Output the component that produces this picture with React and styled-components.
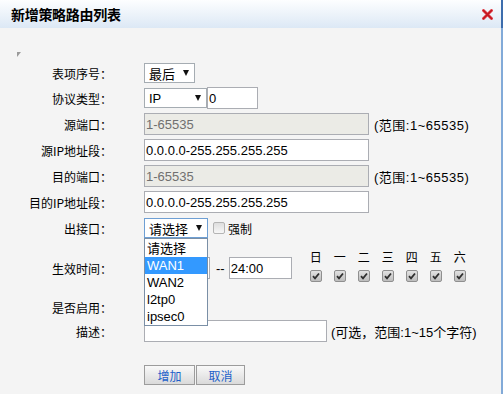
import React from 'react';
import styled, { createGlobalStyle } from 'styled-components';

const GlobalStyle = createGlobalStyle`
  html, body {
    margin: 0;
    padding: 0;
    background: #f4f4f4;
  }
  body {
    font-family: "Liberation Sans", "Noto Sans CJK SC", sans-serif;
    font-size: 12px;
    color: #000;
  }
`;

const Dialog = styled.div`
  width: 503px;
  height: 394px;
  display: flex;
  flex-direction: column;
  overflow: hidden;
`;

const TitleBar = styled.div`
  height: 28px;
  flex-shrink: 0;
  box-sizing: border-box;
  display: flex;
  align-items: center;
  justify-content: space-between;
  padding: 0 8px 0 11px;
  background: linear-gradient(#fdfeff, #dce8f5);
  border-right: 2px solid #3d6dad;
`;

const Title = styled.h1`
  margin: 0;
  font-size: 14px;
  font-weight: bold;
  font-family: "Noto Sans CJK SC", sans-serif;
  letter-spacing: -0.3px;
`;

const Body = styled.div`
  flex: 1;
  background: #f4f4f4;
  border-right: 2px solid #82aad8;
`;

const MarkRow = styled.div`
  height: 33px;
  box-sizing: border-box;
  padding: 18px 0 0 17px;
`;

const Row = styled.div`
  display: flex;
  align-items: center;
  height: ${p => p.h}px;
`;

const Label = styled.div`
  width: 112px;
  flex-shrink: 0;
  margin-right: 32px;
  text-align: right;
  white-space: nowrap;
  font-size: 12px;
  font-family: "Noto Sans CJK SC", sans-serif;
`;

const SelectBox = styled.div`
  position: relative;
  display: inline-flex;
  align-items: center;
  justify-content: space-between;
  box-sizing: border-box;
  width: ${p => p.w}px;
  height: 20px;
  padding: 0 5px 0 4px;
  border: 1px solid ${p => (p.open ? '#6e9fd4' : '#a5acb2')};
  background: #fff;
  font-size: 13px;
  font-family: "Liberation Sans", "Noto Sans CJK SC", sans-serif;
  flex-shrink: 0;
`;

const Arrow = styled.span`
  width: 0;
  height: 0;
  border-left: 3px solid transparent;
  border-right: 3px solid transparent;
  border-top: 6px solid #111;
`;

const DropList = styled.div`
  position: absolute;
  top: 19px;
  left: -1px;
  width: 64px;
  box-sizing: border-box;
  padding-top: 1px;
  border: 1px solid #7a8fa6;
  background: #fff;
  z-index: 10;
`;

const Option = styled.div`
  height: 17px;
  line-height: 17px;
  padding-left: 2px;
  font-size: 13px;
  white-space: nowrap;
  background: ${p => (p.active ? '#3399ff' : '#fff')};
  color: ${p => (p.active ? '#fff' : '#000')};
`;

const TextInput = styled.input`
  width: ${p => p.w}px;
  height: 22px;
  box-sizing: border-box;
  padding: 0 1px;
  margin: 0;
  border: 1px solid #abadb3;
  background: ${p => (p.disabled ? '#ebebe6' : '#fff')};
  color: ${p => (p.disabled ? '#707070' : '#000')};
  font-family: "Liberation Sans", sans-serif;
  font-size: 13px;
  outline: 0;
  flex-shrink: 0;
`;

const Hint = styled.span`
  margin-left: ${p => p.ml || 5}px;
  font-size: 13px;
  letter-spacing: ${p => p.ls || 0}px;
  white-space: nowrap;
`;

const Dash = styled.span`
  margin: 0 4px 0 6px;
  font-size: 13px;
`;

const CheckLabel = styled.span`
  margin-left: 3px;
  font-size: 12px;
  font-family: "Noto Sans CJK SC", sans-serif;
`;

const Box = styled.span`
  display: inline-flex;
  align-items: center;
  justify-content: center;
  width: 12px;
  height: 12px;
  box-sizing: border-box;
  margin-left: ${p => p.ml || 0}px;
  border: 1px solid ${p => (p.checked ? '#8f8f8f' : '#b4b4b4')};
  border-radius: 2px;
  background: ${p => (p.checked
    ? 'linear-gradient(#e2e2e2, #bdbdbd)'
    : 'linear-gradient(#dedede, #f7f7f7)')};
  flex-shrink: 0;
`;

const Week = styled.div`
  display: flex;
  gap: 12px;
  margin-left: 18px;
  margin-bottom: 4px;
`;

const Day = styled.div`
  display: flex;
  flex-direction: column;
  align-items: center;
  gap: 6px;
  width: 12px;
  font-size: 12px;
  line-height: 14px;
  font-family: "Noto Sans CJK SC", sans-serif;
`;

const ButtonRow = styled.div`
  display: flex;
  gap: 1px;
  margin: 22px 0 0 144px;
`;

const Button = styled.button`
  width: ${p => p.w}px;
  height: 20px;
  padding: 0;
  border: 1px solid #9c9c9c;
  background: linear-gradient(#f9f9f9, #dadada);
  color: #1d5fc9;
  font-size: 12px;
  font-family: "Noto Sans CJK SC", sans-serif;
  cursor: pointer;
`;

const Check = ({ checked, ml }) => (
  <Box checked={checked} ml={ml}>
    {checked && (
      <svg width="8" height="8" viewBox="0 0 8 8">
        <path d="M1 4.2 L3 6.3 L7 1.5" fill="none" stroke="#2f2f2f" strokeWidth="1.8" />
      </svg>
    )}
  </Box>
);

const CloseIcon = () => (
  <svg width="11" height="11" viewBox="0 0 11 11">
    <path d="M1.5 1.5 L9.5 9.5 M9.5 1.5 L1.5 9.5" stroke="#e04a52" strokeWidth="3" strokeLinecap="round" />
    <path d="M1.5 1.5 L9.5 9.5 M9.5 1.5 L1.5 9.5" stroke="#c4161f" strokeWidth="1.6" strokeLinecap="round" />
  </svg>
);

const ports = ['请选择', 'WAN1', 'WAN2', 'l2tp0', 'ipsec0'];
const days = ['日', '一', '二', '三', '四', '五', '六'];

const App = () => {
  return (
    <Dialog>
      <GlobalStyle />
      <TitleBar>
        <Title>新增策略路由列表</Title>
        <CloseIcon />
      </TitleBar>
      <Body>
        <MarkRow>
          <svg width="4" height="5" viewBox="0 0 4 5">
            <path d="M0 0 H4 L0 5 Z" fill="#9a9a9a" />
          </svg>
        </MarkRow>

        <Row h={24}>
          <Label>表项序号：</Label>
          <SelectBox w={51}>最后<Arrow /></SelectBox>
        </Row>
        <Row h={26}>
          <Label>协议类型：</Label>
          <SelectBox w={63}>IP<Arrow /></SelectBox>
          <TextInput w={51} defaultValue="0" />
        </Row>
        <Row h={26}>
          <Label>源端口：</Label>
          <TextInput w={225} disabled defaultValue="1-65535" />
          <Hint ls={0.5}>(范围:1~65535)</Hint>
        </Row>
        <Row h={26}>
          <Label>源IP地址段：</Label>
          <TextInput w={225} defaultValue="0.0.0.0-255.255.255.255" />
        </Row>
        <Row h={26}>
          <Label>目的端口：</Label>
          <TextInput w={225} disabled defaultValue="1-65535" />
          <Hint ls={0.5}>(范围:1~65535)</Hint>
        </Row>
        <Row h={26}>
          <Label>目的IP地址段：</Label>
          <TextInput w={225} defaultValue="0.0.0.0-255.255.255.255" />
        </Row>
        <Row h={26}>
          <Label>出接口：</Label>
          <SelectBox w={64} open>
            请选择<Arrow />
            <DropList>
              {ports.map(p => (
                <Option key={p} active={p === 'WAN1'}>{p}</Option>
              ))}
            </DropList>
          </SelectBox>
          <Check ml={5} />
          <CheckLabel>强制</CheckLabel>
        </Row>
        <Row h={54}>
          <Label>生效时间：</Label>
          <TextInput w={66} defaultValue="00:00" />
          <Dash>--</Dash>
          <TextInput w={63} defaultValue="24:00" />
          <Week>
            {days.map(d => (
              <Day key={d}>
                {d}
                <Check checked />
              </Day>
            ))}
          </Week>
        </Row>
        <Row h={24}>
          <Label>是否启用：</Label>
        </Row>
        <Row h={24}>
          <Label>描述：</Label>
          <TextInput w={183} defaultValue="" />
          <Hint ml={4}>(可选，范围:1~15个字符)</Hint>
        </Row>

        <ButtonRow>
          <Button w={51}>增加</Button>
          <Button w={49}>取消</Button>
        </ButtonRow>
      </Body>
    </Dialog>
  );
};

export default App;
